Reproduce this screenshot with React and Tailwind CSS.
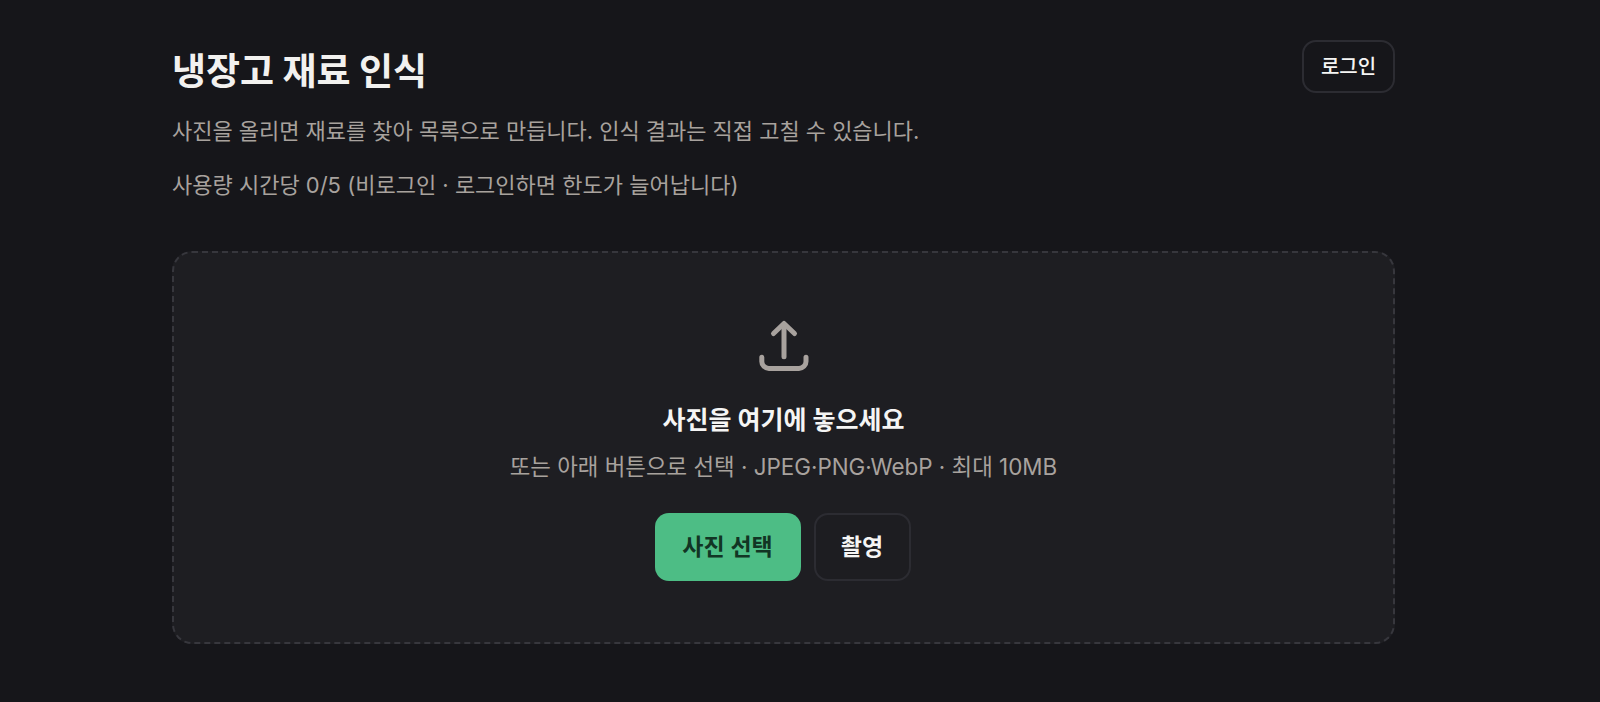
export default function App() {
  return (
    <div className="min-h-[702px] bg-[#16161a] font-['Inter','Noto_Sans_CJK_KR',sans-serif] text-[#f5f5f4]">
      <div className="ml-[172px] w-[1223px] pt-10">
        <div className="flex items-start justify-between">
          <div className="pt-[5px]">
            <h1 className="text-[37px] font-bold leading-[54px] tracking-[-0.1px] text-[#f2f1ef]">냉장고 재료 인식</h1>
            <p className="mt-[16px] text-[22px] leading-8 tracking-[-0.03px] text-[#a8a29e]">사진을 올리면 재료를 찾아 목록으로 만듭니다. 인식 결과는 직접 고칠 수 있습니다.</p>
            <p className="mt-[22px] text-[22px] leading-8 text-[#a8a29e]">사용량 시간당 0/5 (비로그인 · 로그인하면 한도가 늘어납니다)</p>
          </div>
          <button className="h-[53px] w-[93px] rounded-[14px] border-2 border-[#2c2c32] text-[20px] font-medium">로그인</button>
        </div>
        <div className="mt-[50px] flex h-[393px] flex-col items-center rounded-[20px] border-2 border-dashed border-[#37373d] bg-[#1e1e22] pt-[65px]">
          {/* upload icon */}
          <svg width="58" height="58" viewBox="0 0 58 58" fill="none" stroke="#a8a29e" strokeWidth="5" strokeLinecap="round" strokeLinejoin="round">
            <path d="M29 7V38.7" />
            <path d="M18.5 15.5L29 5.5L39.5 15.5" />
            <path d="M6.8 39.3V43.4A7 7 0 0 0 13.8 50.4H44A7 7 0 0 0 51 43.4V39.3" />
          </svg>
          <div className="mt-[26px] text-[25px] font-bold leading-9">사진을 여기에 놓으세요</div>
          <div className="mt-[13px] text-[22.4px] leading-8 text-[#a8a29e]">또는 아래 버튼으로 선택 · JPEG·PNG·WebP · 최대 10MB</div>
          <div className="mt-[30px] flex gap-[13px] pr-[2px]">
            <button className="h-[68px] w-[146px] rounded-[14px] bg-[#4dbd85] text-[23px] font-semibold text-[#123524]">사진 선택</button>
            <button className="h-[68px] w-[97px] rounded-[14px] border-2 border-[#2c2c32] bg-[#1d1d21] text-[23px] font-semibold">촬영</button>
          </div>
        </div>
      </div>
    </div>
  )
}
